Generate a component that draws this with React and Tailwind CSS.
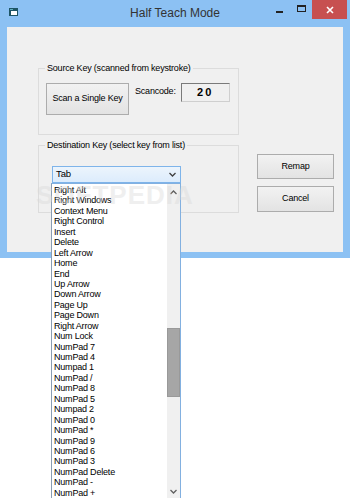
const keys = [
  'Right Alt', 'Right Windows', 'Context Menu', 'Right Control', 'Insert', 'Delete',
  'Left Arrow', 'Home', 'End', 'Up Arrow', 'Down Arrow', 'Page Up', 'Page Down',
  'Right Arrow', 'Num Lock', 'NumPad 7', 'NumPad 4', 'Numpad 1', 'NumPad /', 'NumPad 8',
  'NumPad 5', 'Numpad 2', 'NumPad 0', 'NumPad *', 'NumPad 9', 'NumPad 6', 'NumPad 3',
  'NumPad Delete', 'NumPad -', 'NumPad +',
];

const Chevron = ({ up, color = '#606060' }) => (
  <svg width="7" height="5" viewBox="0 0 7 5">
    <path
      d={up ? 'M0.5 4L3.5 1L6.5 4' : 'M0.5 1L3.5 4L6.5 1'}
      fill="none"
      stroke={color}
      strokeWidth="1.3"
    />
  </svg>
);

const WinButton = ({ children, className = '' }) => (
  <button
    className={`flex items-center justify-center border border-[#acacac] bg-gradient-to-b from-[#f2f2f2] to-[#e3e3e3] text-[9px] tracking-[-0.2px] text-black ${className}`}
  >
    {children}
  </button>
);

const GroupBox = ({ label, className = '', children }) => (
  <div className={`relative border border-[#dcdcdc] ${className}`}>
    <span className="absolute -top-[7px] left-[6px] bg-[#f0f0f0] px-[2px] text-[9px] leading-[12px] tracking-[-0.2px] text-black">
      {label}
    </span>
    {children}
  </div>
);

const KeyList = () => (
  <div className="absolute left-[-1px] top-[17px] flex h-[318px] w-[130px] border border-[#82b0e0] border-l-[#8a9db3] bg-white">
    <div className="flex-1 pl-[2px] pt-[1px]">
      {keys.map((k) => (
        <div key={k} className="h-[10.45px] text-[9px] leading-[10.45px] tracking-[-0.2px] text-black whitespace-nowrap">
          {k}
        </div>
      ))}
    </div>
    <div className="flex w-[13px] flex-col bg-[#f0f0f0]">
      <div className="flex h-[17px] items-center justify-center">
        <Chevron up />
      </div>
      <div className="flex-1 pt-[127px]">
        <div className="h-[69px] border border-[#999999] bg-[#a6a6a6]" />
      </div>
      <div className="flex h-[17px] items-center justify-center">
        <Chevron />
      </div>
    </div>
  </div>
);

export default function App() {
  return (
    <div className="relative h-[498px] w-[350px] overflow-hidden bg-white font-['Liberation_Sans',Arial,sans-serif]">
      <div className="flex h-[258px] w-[350px] flex-col bg-[#8cc1f3]">
        {/* title bar */}
        <div className="grid h-[27px] grid-cols-[77px_1fr_77px]">
          <div className="pl-[9px] pt-[8px]">
            <svg width="10" height="9" viewBox="0 0 10 9">
              <rect x="0" y="0" width="9" height="8" fill="#1e5566" />
              <rect x="2" y="3" width="6" height="4" fill="#ffffff" />
              <rect x="1" y="1" width="3" height="1" fill="#5fb0c0" />
            </svg>
          </div>
          <div className="pt-[5px] text-center text-[12px] leading-[16px] text-[#333333]">Half Teach Mode</div>
          <div className="flex items-start">
            <div className="mt-[11px] ml-[3px] h-[2px] w-[7px] bg-[#222222]" />
            <div className="mt-[5px] ml-[14px] h-[7px] w-[9px] border border-t-2 border-[#222222]" />
            <div className="ml-[6px] flex h-[19px] w-[35px] items-center justify-center bg-[#c75050]">
              <svg width="8" height="8" viewBox="0 0 8 8">
                <path d="M1 1L7 7M7 1L1 7" stroke="#ffffff" strokeWidth="1.6" />
              </svg>
            </div>
          </div>
        </div>

        {/* client area */}
        <div className="mx-[7px] flex h-[225px] bg-[#f0f0f0] pl-[31px] pt-[41px]">
          <div className="flex w-[201px] flex-col">
            <GroupBox label="Source Key (scanned from keystroke)" className="h-[67px]">
              <div className="flex items-start pl-[7px] pt-[14px]">
                <WinButton className="h-[32px] w-[83px]">Scan a Single Key</WinButton>
                <span className="ml-[6px] mt-[2px] text-[9px] leading-[12px] tracking-[-0.2px] text-black">Scancode:</span>
                <div className="ml-[5px] flex h-[19px] w-[49px] items-center justify-center border border-[#7a7a7a] border-b-[#cfcfcf] border-r-[#cfcfcf] text-[11px] font-bold tracking-[2px] text-black">
                  20
                </div>
              </div>
            </GroupBox>
            <GroupBox label="Destination Key (select key from list)" className="mt-[10px] h-[68px]">
              <div className="pl-[13px] pt-[20px]">
                <div className="relative h-[17px] w-[129px]">
                  <div className="flex h-[17px] items-center justify-between border border-[#7eb4ea] bg-gradient-to-b from-[#ecf4fc] to-[#dcecfc] pl-[3px] pr-[4px]">
                    <span className="text-[9.5px] tracking-[-0.1px] text-black">Tab</span>
                    <Chevron color="#404040" />
                  </div>
                  <KeyList />
                </div>
              </div>
            </GroupBox>
          </div>
          <div className="ml-[18px] mt-[86px] flex flex-col gap-[7px]">
            <WinButton className="h-[25px] w-[77px]">Remap</WinButton>
            <WinButton className="h-[26px] w-[77px]">Cancel</WinButton>
          </div>
        </div>
      </div>
      <span className="pointer-events-none absolute left-[36px] top-[176px] text-[26px] font-bold tracking-[1px] text-[#d8d8d8] opacity-40">
        SOFTPEDIA
      </span>
    </div>
  );
}
